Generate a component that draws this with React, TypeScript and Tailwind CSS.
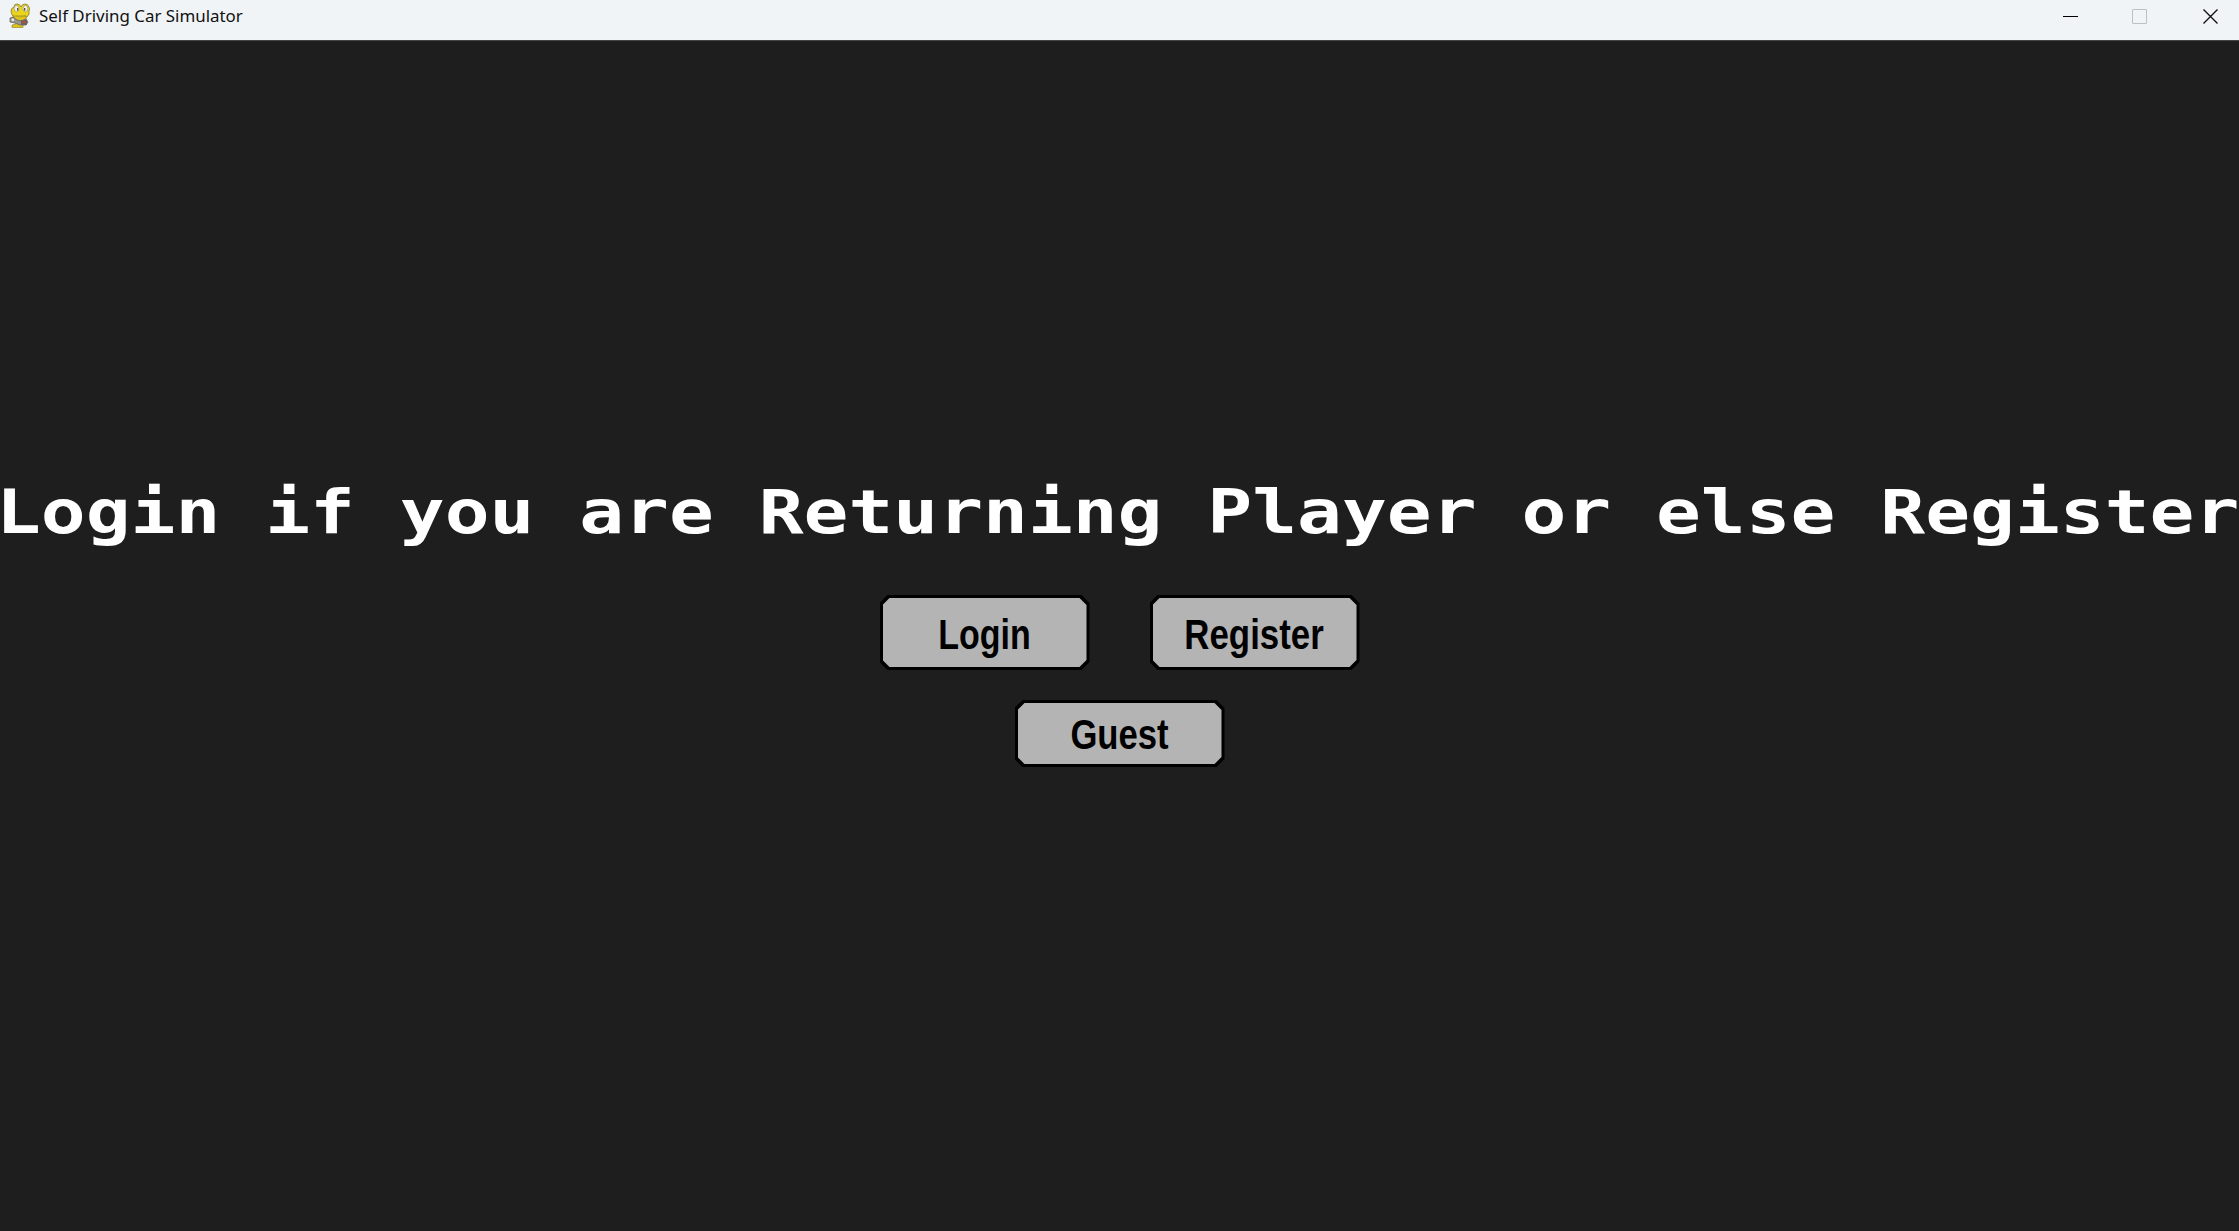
import React from 'react';

function SnakeIcon() {
  return (
    <svg className="ml-2 mt-[3px] h-[26px] w-6 shrink-0" viewBox="0 0 24 26">
      <path d="M4 12 L3 8 Q3 5 6 4 Q6 1 9 1 Q12 1 13 4 Q14 1 17 1 Q20 1 21 4 Q22 6 21 8 Q22 11 19 14 L13 16 Q6 15 4 12Z" fill="#ead51c" stroke="#857b2b" strokeWidth="0.8" />
      <path d="M5 13 H18 L18 18 L15 20 V24.5 H4 V22 L8 21Z" fill="#dec31b" stroke="#8a7b28" strokeWidth="0.6" />
      <ellipse cx="8.5" cy="5.6" rx="2.4" ry="3.1" fill="#edf1e9" stroke="#8f8c62" strokeWidth="0.6" />
      <ellipse cx="17.4" cy="5.6" rx="2.4" ry="3.1" fill="#edf1e9" stroke="#8f8c62" strokeWidth="0.6" />
      <rect x="9" y="5" width="1.3" height="2.6" fill="#4e4f49" />
      <rect x="16" y="5" width="1.3" height="2.6" fill="#4e4f49" />
      <path d="M8 13 Q13 15 18 12" fill="none" stroke="#b39f20" strokeWidth="0.7" />
      <path d="M2 15 L5 14 L9 17 L13 18 L18 16 L20 19 L18 22 L12 22 L7 20 L2 19Z" fill="#96968f" stroke="#66645e" strokeWidth="0.8" />
      <circle cx="4.8" cy="16.8" r="1.4" fill="#ececec" />
      <rect x="13" y="17" width="6" height="5" fill="#6a6560" />
      <rect x="15" y="18" width="2.4" height="2.4" fill="#c74335" />
    </svg>
  );
}

function TitleBar() {
  return (
    <header className="flex h-10 shrink-0 items-start justify-between bg-[#f0f4f6]">
      <div className="flex items-start">
        <SnakeIcon />
        <h1 className="ml-[7px] mt-[3px] origin-left scale-x-[0.994] whitespace-nowrap font-['Noto_Sans',sans-serif] text-[17px] leading-[26px] text-[#111]">
          Self Driving Car Simulator
        </h1>
      </div>
      <div className="mr-[21px] mt-[9px] flex gap-[54px]">
        <button aria-label="Minimize" className="flex h-[15px] w-[15px] items-center">
          <span className="h-px w-full bg-black" />
        </button>
        <button aria-label="Maximize" className="h-[15px] w-[15px] rounded-[1px] border border-[#bdc0c2]" />
        <button aria-label="Close" className="ml-[2px] h-[15px] w-[15px]">
          <svg viewBox="0 0 15 15" className="h-[15px] w-[15px]">
            <path d="M.5 .5 L14.5 14.5 M14.5 .5 L.5 14.5" stroke="#111" strokeWidth="1.4" />
          </svg>
        </button>
      </div>
    </header>
  );
}

const chamfer = '[clip-path:polygon(8px_0,calc(100%-8px)_0,100%_8px,100%_calc(100%-8px),calc(100%-8px)_100%,8px_100%,0_calc(100%-8px),0_8px)]';
const innerChamfer = '[clip-path:polygon(7px_0,calc(100%-7px)_0,100%_7px,100%_calc(100%-7px),calc(100%-7px)_100%,7px_100%,0_calc(100%-7px),0_7px)]';

function MenuButton({ label, size, text }: { label: string; size: string; text: string }) {
  return (
    <button className={`flex w-[210px] bg-black p-[3px] ${size} ${chamfer}`}>
      <span className={`flex h-full w-full items-center justify-center bg-[#b4b4b4] ${innerChamfer}`}>
        <span className={`whitespace-nowrap font-['Liberation_Sans',sans-serif] font-bold leading-none text-black ${text}`}>
          {label}
        </span>
      </span>
    </button>
  );
}

export default function App() {
  return (
    <div className="flex h-[1231px] w-[2239px] flex-col overflow-hidden bg-[#1e1e1e]">
      <TitleBar />
      <main className="flex flex-1 flex-col items-center border-t border-[#444]">
        <h2 className="-ml-[9px] mt-[431px] h-[80px] w-full origin-left scale-x-[1.242] whitespace-pre font-['DejaVu_Sans_Mono',monospace] text-[60px] font-bold leading-[80px] text-white">
          Login if you are Returning Player or else Register
        </h2>
        <div className="mt-[43px] flex gap-[60px]">
          <MenuButton label="Login" size="h-[75px]" text="text-[43px] scale-x-[0.79] mt-[3px]" />
          <MenuButton label="Register" size="h-[75px]" text="text-[43px] scale-x-[0.81] mt-[3px]" />
        </div>
        <div className="mt-[30px] flex">
          <MenuButton label="Guest" size="h-[67px]" text="text-[42px] scale-x-[0.825] mt-[3px]" />
        </div>
      </main>
    </div>
  );
}
